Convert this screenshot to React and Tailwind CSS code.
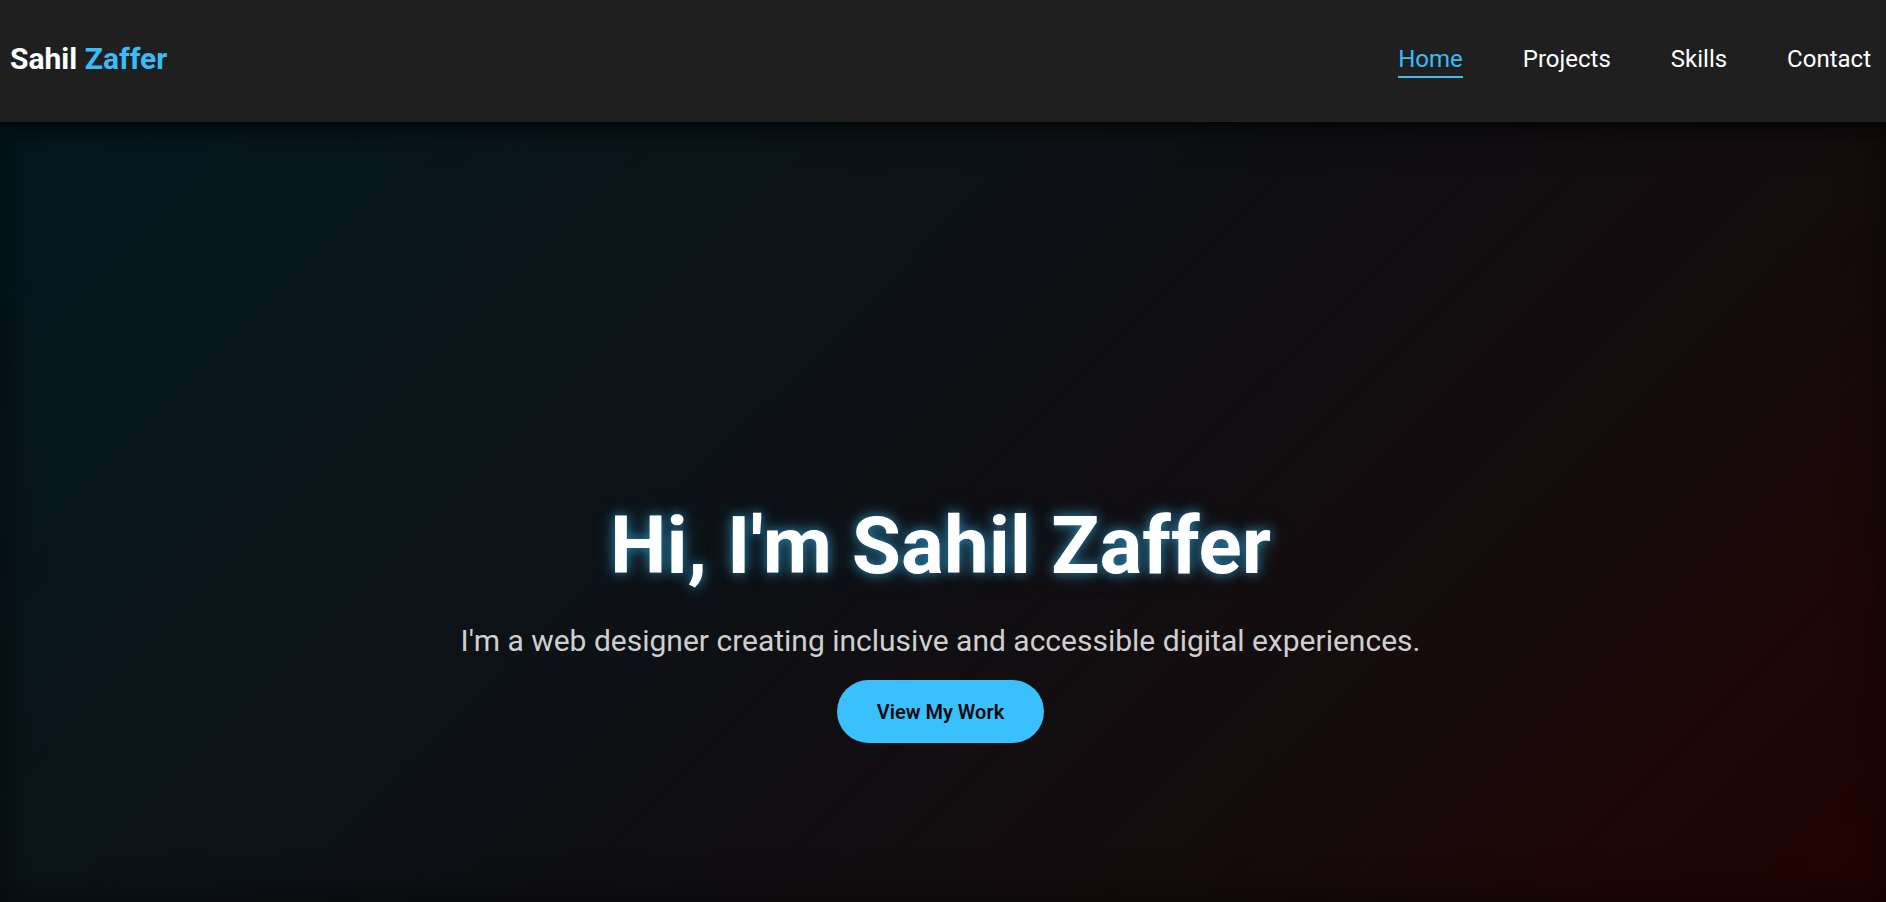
import React from 'react';

const links = ['Home', 'Projects', 'Skills', 'Contact'];

export default function App() {
  return (
    <div className="min-h-screen bg-[#0f0f13] font-['Roboto',_'Liberation_Sans',_sans-serif] text-white">
      <header className="relative z-10 flex h-[122px] items-center justify-between bg-[#1f1f1f] pb-[4px] pl-[10px] pr-[15px] shadow-[0_3px_10px_rgba(0,0,0,0.55)]">
        <h1 className="text-[30px] font-bold leading-none">
          Sahil <span className="text-[#38bdf8]">Zaffer</span>
        </h1>
        <nav className="flex items-center gap-[60px]">
          {links.map((l, i) => (
            <a
              key={l}
              href="#"
              className={
                i === 0
                  ? 'border-b-2 border-[#38bdf8] pb-[3px] pt-[5px] text-[24px] leading-[28px] text-[#38bdf8]'
                  : 'border-b-2 border-transparent pb-[3px] pt-[5px] text-[24px] leading-[28px] text-white'
              }
            >
              {l}
            </a>
          ))}
        </nav>
      </header>

      <section className="flex h-[780px] flex-col items-center bg-[linear-gradient(135deg,#02181f_0%,#0b1419_30%,#0f0f13_50%,#150c0d_72%,#230303_100%)] pr-[5px] pt-[376px] text-center shadow-[inset_0_0_40px_rgba(0,0,0,0.55)]">
        <h2 className="text-[80px] font-bold leading-[96px] [text-shadow:0_0_12px_rgba(56,189,248,0.65),0_0_24px_rgba(56,189,248,0.25)]">
          Hi, I'm Sahil Zaffer
        </h2>
        <p className="mt-[24px] text-[30px] leading-[45px] text-[#cfcfcf]">
          I'm a web designer creating inclusive and accessible digital experiences.
        </p>
        <a
          href="#"
          className="mt-[17px] flex h-[63px] items-center rounded-full bg-[#3ac0fd] px-10 text-[20px] font-semibold text-[#0a0a0a]"
        >
          View My Work
        </a>
      </section>
    </div>
  );
}
